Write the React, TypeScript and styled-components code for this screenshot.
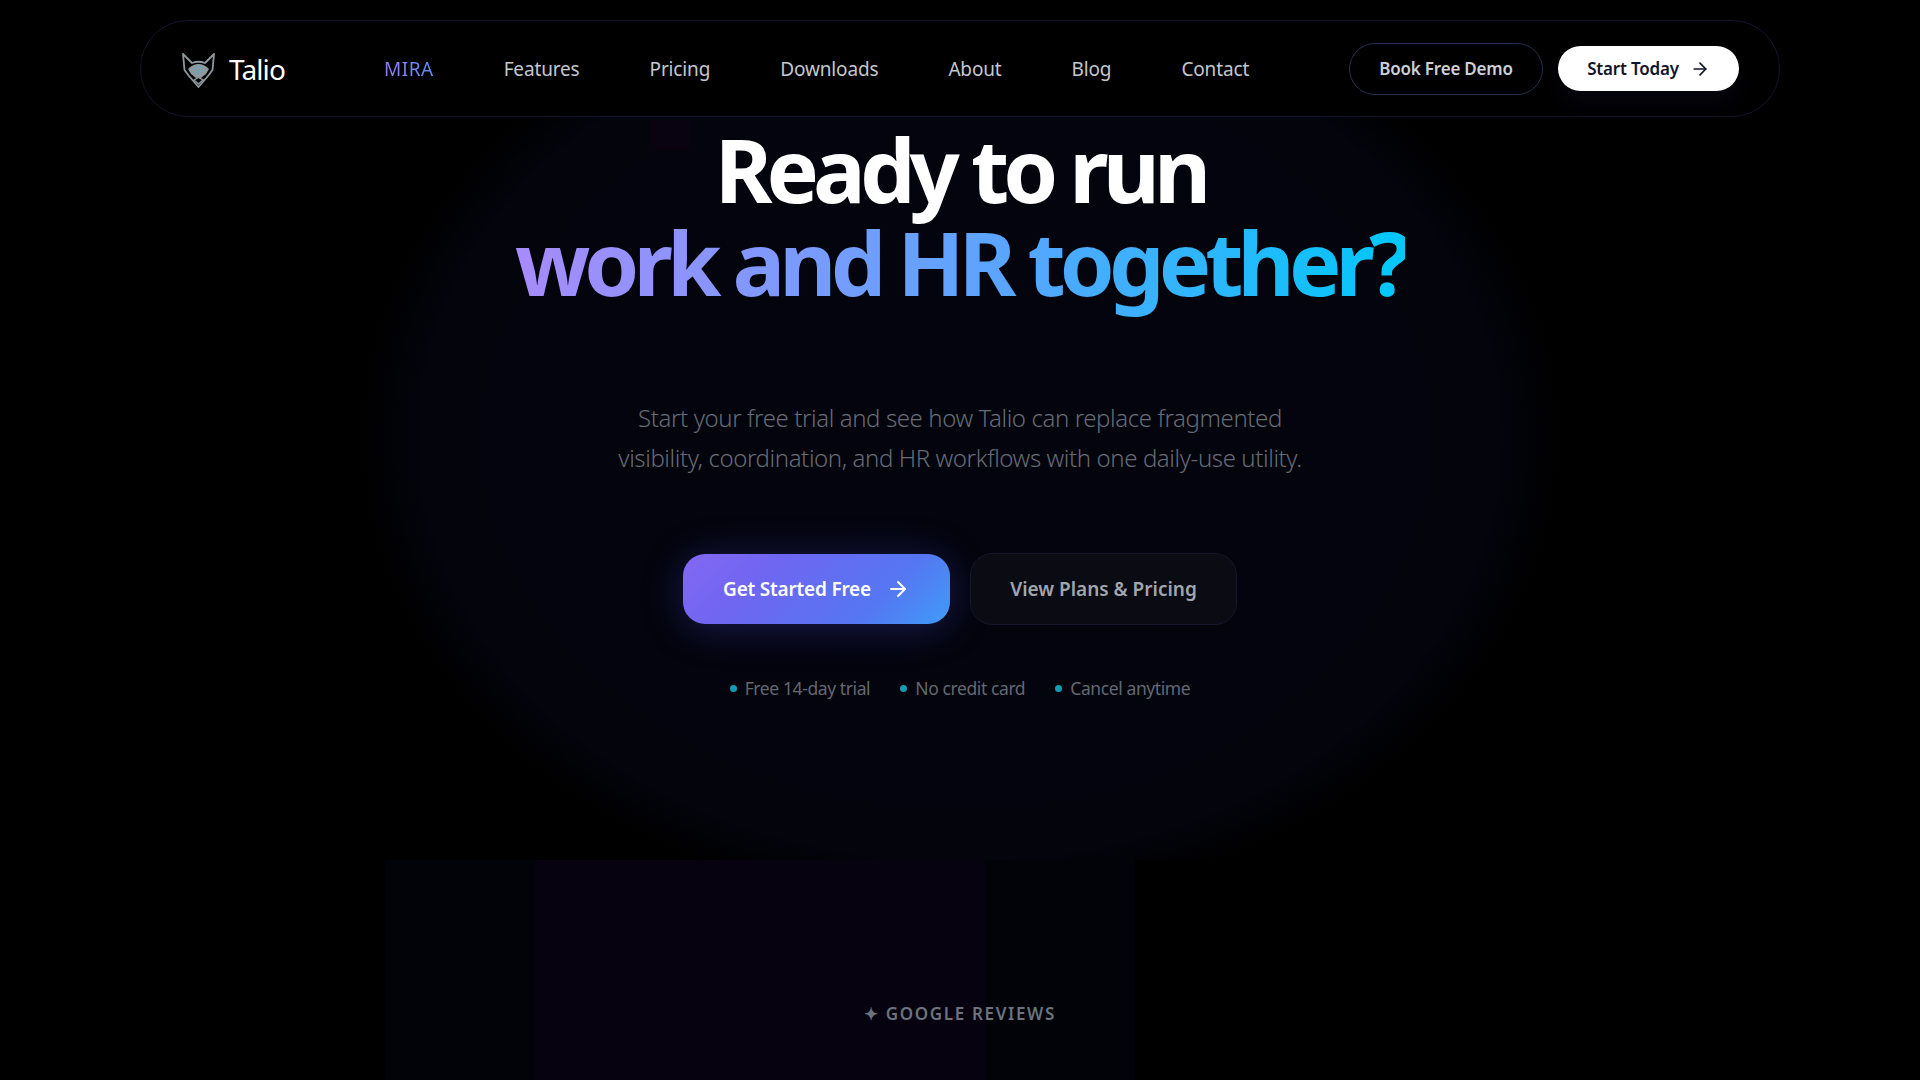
import styled, { createGlobalStyle } from 'styled-components'
import { ArrowRight } from 'lucide-react'

const GlobalStyle = createGlobalStyle`
  html, body {
    margin: 0;
    background: #000;
    overflow: hidden;
  }
  * {
    box-sizing: border-box;
  }
`

const Page = styled.div`
  height: 1080px;
  overflow: hidden;
  background: #000;
  font-family: 'Noto Sans', 'Open Sans', sans-serif;
  display: flex;
  flex-direction: column;
`

const Nav = styled.nav`
  flex: none;
  width: 1640px;
  height: 97px;
  margin: 20px 0 0 140px;
  padding: 0 40px 0 40px;
  border: 1px solid #14142a;
  border-radius: 48px;
  background: #000;
  display: flex;
  align-items: center;
`

const Brand = styled.div`
  width: 203px;
  display: flex;
  align-items: center;
  gap: 12px;
  color: #fff;
  font-size: 28px;
  letter-spacing: -0.9px;
`

const NavLinks = styled.div`
  flex: 1;
  display: flex;
  align-items: center;
  gap: 70px;
`

const NavLink = styled.a<{ $active?: boolean }>`
  font-size: 19px;
  letter-spacing: -0.15px;
  color: #c4c7cd;
  ${({ $active }) =>
    $active &&
    `
    letter-spacing: 0.5px;
    background: linear-gradient(90deg, #927cf7, #5b8ff8);
    -webkit-background-clip: text;
    background-clip: text;
    color: transparent;
  `}
`

const NavActions = styled.div`
  display: flex;
  align-items: center;
  gap: 15px;
`

const DemoButton = styled.button`
  width: 194px;
  height: 52px;
  border: 1px solid #24304e;
  border-radius: 26px;
  background: transparent;
  color: #cdd0d8;
  font: 600 17px 'Noto Sans', sans-serif;
  letter-spacing: -0.2px;
`

const StartButton = styled.button`
  width: 181px;
  height: 45px;
  border: 0;
  border-radius: 23px;
  background: #fff;
  color: #12142a;
  font: 600 17px 'Noto Sans', sans-serif;
  letter-spacing: -0.2px;
  display: flex;
  align-items: center;
  justify-content: center;
  gap: 11px;
  box-shadow: 0 14px 26px rgba(40, 40, 90, 0.16);
`

const Hero = styled.main`
  flex: 1;
  display: flex;
  flex-direction: column;
  align-items: center;
  background:
    linear-gradient(#090210, #090210) 650px 3px / 40px 30px no-repeat,
    radial-gradient(
      600px 470px at 960px 320px,
      #03040d 0%,
      #03040c 90%,
      #000 100%
    );
`

const Title = styled.h1`
  margin: 6px 0 0;
  font-size: 88px;
  font-weight: 700;
  line-height: 93px;
  letter-spacing: -5.9px;
  text-align: center;
  color: #fff;
`

const TitleAccent = styled.span`
  display: block;
  padding-bottom: 24px;
  margin-bottom: -24px;
  background: linear-gradient(90deg, #a78bfa 0%, #5aa5ff 55%, #00c8f8 100%);
  -webkit-background-clip: text;
  background-clip: text;
  color: transparent;
`

const Lead = styled.p`
  margin: 89px 0 0;
  font-size: 24px;
  font-weight: 300;
  line-height: 40px;
  letter-spacing: -0.4px;
  text-align: center;
  color: #666b76;
`

const Actions = styled.div`
  margin-top: 75px;
  display: flex;
  align-items: center;
  gap: 20px;
`

const PrimaryCta = styled.button`
  width: 267px;
  height: 70px;
  border: 0;
  border-radius: 22px;
  background: linear-gradient(
    135deg,
    #8468f2 0%,
    #6f66f2 30%,
    #5577f2 72%,
    #3f9cf8 100%
  );
  color: #fff;
  font: 600 19px 'Noto Sans', sans-serif;
  letter-spacing: -0.2px;
  display: flex;
  align-items: center;
  justify-content: center;
  gap: 15px;
  box-shadow: 0 4px 42px rgba(84, 84, 240, 0.3);
`

const SecondaryCta = styled.button`
  width: 267px;
  height: 72px;
  border: 1px solid #16162c;
  border-radius: 22px;
  background: #0a0b13;
  color: #a0a5ae;
  font: 600 19px 'Noto Sans', sans-serif;
  letter-spacing: 0;
`

const Checks = styled.ul`
  margin: 51px 0 0;
  padding: 0;
  list-style: none;
  display: flex;
  gap: 30px;
`

const Check = styled.li`
  display: flex;
  align-items: center;
  gap: 8px;
  font-size: 17.5px;
  letter-spacing: -0.4px;
  color: #636873;

  &::before {
    content: '';
    width: 7px;
    height: 7px;
    border-radius: 50%;
    background: #0f9cb4;
  }
`

const Reviews = styled.section`
  flex: none;
  height: 220px;
  display: flex;
  align-items: flex-start;
  justify-content: center;
  padding-top: 142px;
  background:
    linear-gradient(#07020f, #07020f) 535px 0 / 450px 100% no-repeat,
    linear-gradient(#020308, #020308) 385px 0 / 750px 100% no-repeat;
  color: #6b7280;
  font-size: 17px;
  font-weight: 600;
  letter-spacing: 1.65px;
  line-height: 24px;
`

const FoxLogo = () => (
  <svg width="36" height="38" viewBox="0 0 36 38" fill="none">
    <path
      d="M2 4 L11 13 Q17.5 10.5 24 13 L33 4 L31.5 20 L27 26 L17.5 37 L8 26 L3.5 20 Z"
      stroke="#8d999e"
      strokeWidth="1.8"
      strokeLinejoin="round"
    />
    <path
      d="M7 19 Q12 14 17.5 14 Q23 14 28 19 L25 24 L17.5 30 L10 24 Z"
      fill="#8d999e"
    />
    <path
      d="M13 30 L17.5 27.5 L22 30 L17.5 34 Z"
      fill="#000"
      stroke="#8d999e"
      strokeWidth="1.4"
    />
    <g fill="#35b6e6">
      <circle cx="13" cy="19" r="0.8" />
      <circle cx="16" cy="16.5" r="0.8" />
      <circle cx="19.5" cy="17" r="0.8" />
      <circle cx="17.5" cy="20.5" r="0.8" />
      <circle cx="21.5" cy="20.5" r="0.8" />
      <circle cx="15" cy="23" r="0.8" />
    </g>
  </svg>
)

const navItems = ['Features', 'Pricing', 'Downloads', 'About', 'Blog', 'Contact']

const App = () => (
  <Page>
    <GlobalStyle />
    <Nav>
      <Brand>
        <FoxLogo />
        Talio
      </Brand>
      <NavLinks>
        <NavLink $active>MIRA</NavLink>
        {navItems.map((item) => (
          <NavLink key={item}>{item}</NavLink>
        ))}
      </NavLinks>
      <NavActions>
        <DemoButton>Book Free Demo</DemoButton>
        <StartButton>
          Start Today
          <ArrowRight size={20} strokeWidth={2} />
        </StartButton>
      </NavActions>
    </Nav>
    <Hero>
      <Title>
        Ready to run
        <TitleAccent>work and HR together?</TitleAccent>
      </Title>
      <Lead>
        Start your free trial and see how Talio can replace fragmented
        <br />
        visibility, coordination, and HR workflows with one daily-use utility.
      </Lead>
      <Actions>
        <PrimaryCta>
          Get Started Free
          <ArrowRight size={24} strokeWidth={2} />
        </PrimaryCta>
        <SecondaryCta>View Plans &amp; Pricing</SecondaryCta>
      </Actions>
      <Checks>
        <Check>Free 14-day trial</Check>
        <Check>No credit card</Check>
        <Check>Cancel anytime</Check>
      </Checks>
    </Hero>
    <Reviews>✦ GOOGLE REVIEWS</Reviews>
  </Page>
)

export default App
